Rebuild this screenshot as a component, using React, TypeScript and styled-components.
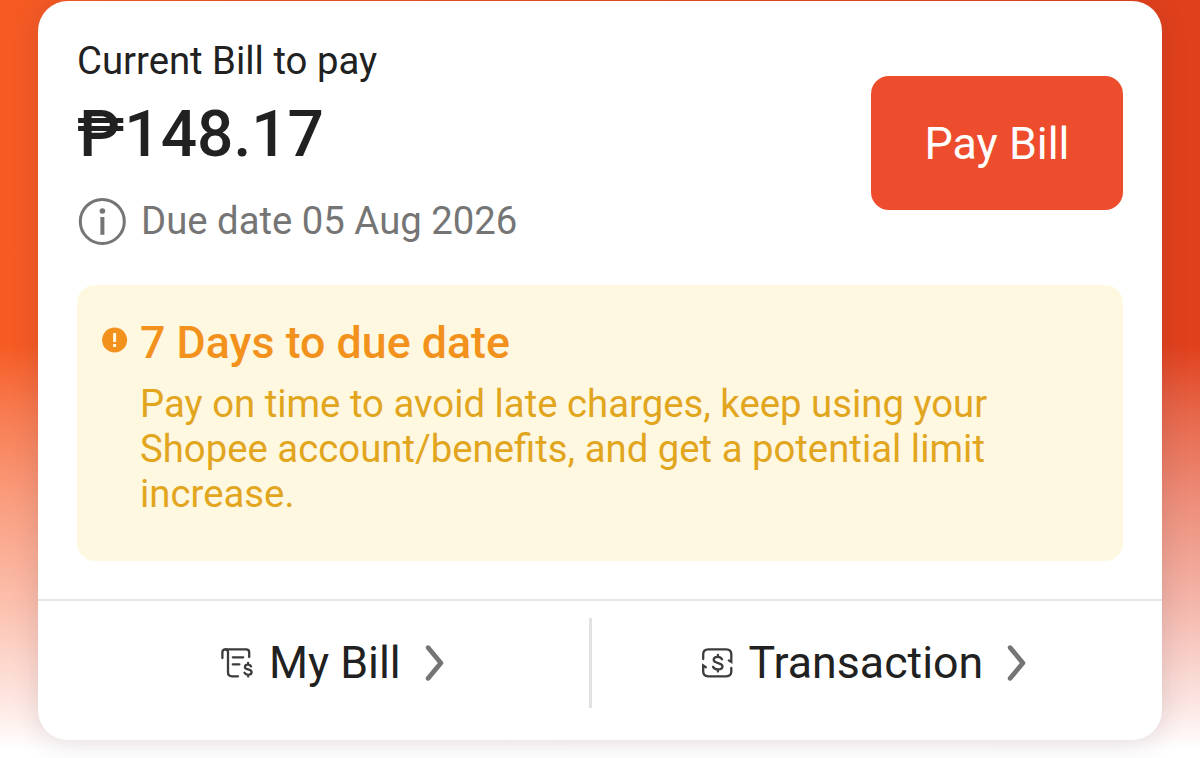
import React from 'react';
import styled, { createGlobalStyle } from 'styled-components';

const GlobalStyle = createGlobalStyle`
  * {
    box-sizing: border-box;
  }

  body {
    margin: 0;
    background: #fff;
    font-family: Roboto, "Liberation Sans", sans-serif;
    color: #212121;
    overflow: hidden;
  }
`;

const Page = styled.main`
  height: 758px;
  padding: 1px 38px 0;
  background:
    linear-gradient(
      to bottom,
      rgba(255, 248, 250, 0) 345px,
      rgba(255, 248, 250, 0.2) 410px,
      rgba(255, 248, 250, 0.42) 500px,
      rgba(255, 248, 250, 0.63) 600px,
      rgba(255, 250, 251, 0.88) 700px,
      #fff 750px
    ),
    linear-gradient(to right, #f65b24, #e0401c);
`;

const Card = styled.section`
  height: 739px;
  border-radius: 30px;
  background: #fff;
  box-shadow: 0 2px 28px rgba(70, 40, 60, 0.15);
`;

const CardBody = styled.div`
  height: 598px;
  padding: 37px 39px 0;
`;

const Summary = styled.div`
  display: flex;
  justify-content: space-between;
  align-items: flex-start;
`;

const Label = styled.p`
  margin: 0;
  font-size: 38.3px;
  line-height: 46px;
`;

const Amount = styled.p`
  margin: 13px 0 24px;
  font-size: 64px;
  font-weight: 500;
  line-height: 76px;
`;

const DueDate = styled.div`
  display: flex;
  align-items: center;
  gap: 15px;
  padding-left: 1px;
  font-size: 38.3px;
  line-height: 48px;
  color: #757575;
`;

const PayButton = styled.button`
  width: 252px;
  height: 134px;
  margin-top: 38px;
  padding: 0;
  border: none;
  border-radius: 18px;
  background: #ee4d2d;
  color: #fff;
  font-family: inherit;
  font-size: 44.8px;
`;

const Notice = styled.div`
  display: flex;
  gap: 12px;
  height: 275.5px;
  margin-top: 40px;
  padding: 32px 25px 0;
  border-radius: 18px;
  background: #fff8e1;
`;

const NoticeIcon = styled.svg`
  flex: none;
  margin-top: 10px;
`;

const NoticeTitle = styled.h2`
  margin: 0;
  font-size: 44.75px;
  font-weight: 500;
  line-height: 52px;
  color: #f2921d;
`;

const NoticeText = styled.p`
  margin: 12px 0 0;
  font-size: 38.32px;
  line-height: 45px;
  color: #e2a51e;
`;

const Footer = styled.nav`
  display: flex;
  height: 141px;
  border-top: 2px solid #e6e6e6;
`;

const FooterLink = styled.a<{ $width: number; $offset: number }>`
  display: flex;
  width: ${({ $width }) => $width}px;
  height: 122px;
  padding-left: ${({ $offset }) => $offset}px;
  align-items: center;
  font-size: 44.7px;
  color: #212121;
`;

const FooterLabel = styled.span`
  margin: 0 24px 0 16px;
  padding-top: 2px;
  white-space: nowrap;
`;

const Divider = styled.div`
  width: 3px;
  height: 90px;
  margin-top: 17px;
  background: #e2e2e2;
`;

const InfoIcon = () => (
  <svg width="48" height="48" viewBox="0 0 48 48" fill="none">
    <circle cx="24.3" cy="24.4" r="22" stroke="#757575" strokeWidth="3" />
    <circle cx="24.4" cy="14" r="2.8" fill="#757575" />
    <path d="M24.4 20V37.8" stroke="#757575" strokeWidth="4" />
  </svg>
);

const BillIcon = () => (
  <svg width="32" height="34" viewBox="0 0 32 34" fill="none" stroke="#3c3c3c" strokeWidth="2.3" strokeLinecap="round">
    <path d="M1.4 13V7.3Q1.4 4.3 4.4 4.3H25.2Q28.2 4.3 28.2 7.3V12" />
    <path d="M4.4 4.3Q7 4.3 7 7.3V27.3Q7 31.3 11 31.3H17" />
    <path d="M11.8 12.3H22.2M11.8 19.3H18.4" />
    <path d="M30 21.4C29.3 20.1 28.2 19.6 27 19.6C25.1 19.6 23.9 20.6 23.9 21.9C23.9 25.4 30.6 23.5 30.6 27.1C30.6 28.8 29.2 29.8 27.2 29.8C25.5 29.8 24.2 29.1 23.5 27.8M27.1 17.8V19.6M27.1 29.8V31.6" />
  </svg>
);

const TransactionIcon = () => (
  <svg width="32" height="34" viewBox="0 0 32 34" fill="none" stroke="#3c3c3c" strokeWidth="2.3" strokeLinecap="round">
    <path d="M2.2 14V9.3Q2.2 4.3 7.2 4.3H25.3Q30.3 4.3 30.3 9.3V17L27.8 15.4" />
    <path d="M30.3 23V26.3Q30.3 31.3 25.3 31.3H7.2Q2.2 31.3 2.2 26.3V20.4L4.8 22.2" />
    <path d="M21 14.2C20.1 12.5 18.6 11.8 16.7 11.8C14.3 11.8 12.7 13 12.7 14.8C12.7 19.2 21.5 16.9 21.5 21.3C21.5 23.3 19.6 24.5 17 24.5C14.6 24.5 12.8 23.5 12 21.8M16.9 9.8V11.8M16.9 24.5V26.5" />
  </svg>
);

const Chevron = () => (
  <svg width="20" height="38" viewBox="0 0 20 38" fill="none">
    <path d="M3.2 4.7L15.9 20L3.2 35.3" stroke="#757575" strokeWidth="4.8" strokeLinecap="round" strokeLinejoin="round" />
  </svg>
);

const App: React.FC = () => {
  return (
    <>
      <GlobalStyle />
      <Page>
        <Card>
          <CardBody>
            <Summary>
              <div>
                <Label>Current Bill to pay</Label>
                <Amount>₱148.17</Amount>
                <DueDate>
                  <InfoIcon />
                  <span>Due date 05 Aug 2026</span>
                </DueDate>
              </div>
              <PayButton>Pay Bill</PayButton>
            </Summary>
            <Notice>
              <NoticeIcon width="26" height="26" viewBox="0 0 26 26">
                <circle cx="12.6" cy="13" r="12.5" fill="#f2921d" />
                <path d="M11.1 6H14.1V15H11.1ZM11.1 17H14.1V20H11.1Z" fill="#fff8e1" />
              </NoticeIcon>
              <div>
                <NoticeTitle>7 Days to due date</NoticeTitle>
                <NoticeText>
                  Pay on time to avoid late charges, keep using your
                  <br />
                  Shopee account/benefits, and get a potential limit
                  <br />
                  increase.
                </NoticeText>
              </div>
            </Notice>
          </CardBody>
          <Footer>
            <FooterLink $width={551} $offset={183}>
              <BillIcon />
              <FooterLabel>My Bill</FooterLabel>
              <Chevron />
            </FooterLink>
            <Divider />
            <FooterLink $width={570} $offset={108.5}>
              <TransactionIcon />
              <FooterLabel>Transaction</FooterLabel>
              <Chevron />
            </FooterLink>
          </Footer>
        </Card>
      </Page>
    </>
  );
};

export default App;
